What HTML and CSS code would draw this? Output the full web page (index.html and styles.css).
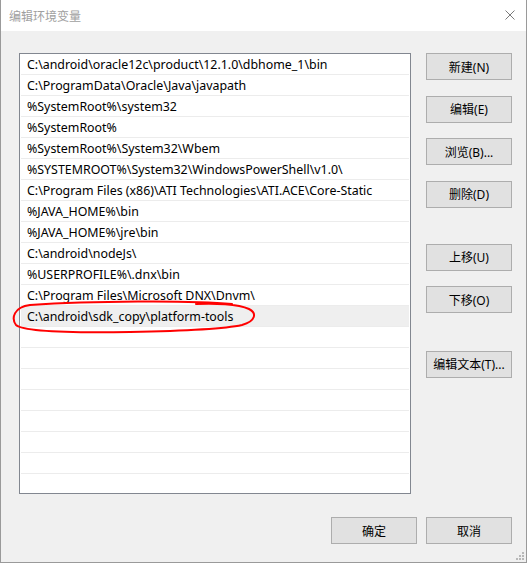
FILE: index.html
```html
<!DOCTYPE html>
<html lang="zh-CN">
<head>
  <meta charset="UTF-8">
  <title>编辑环境变量</title>
  <link rel="stylesheet" href="styles.css">
</head>
<body>
  <div class="window">
    <div class="title-bar">
      <span class="title">编辑环境变量</span>
      <svg class="close" width="10" height="10" viewBox="0 0 10 10">
        <path d="M0.5 0.5 L9.5 9.5 M9.5 0.5 L0.5 9.5" stroke="#7a7a7a" stroke-width="1" fill="none"/>
      </svg>
    </div>

    <div class="content">
      <div class="path-list" id="pathList"></div>

      <div class="side-buttons">
        <button>新建(N)</button>
        <button>编辑(E)</button>
        <button>浏览(B)...</button>
        <button>删除(D)</button>
        <button class="spaced">上移(U)</button>
        <button>下移(O)</button>
        <button class="spaced-more">编辑文本(T)...</button>
      </div>
    </div>

    <div class="footer">
      <button>确定</button>
      <button>取消</button>
    </div>

    <!-- marque rouge dessinée à la main autour de la ligne sélectionnée -->
    <svg class="annotation" width="527" height="563" viewBox="0 0 527 563">
      <path d="M232 304 C190 300, 90 301, 30 305 C14 307, 11 318, 16 325 C24 332, 70 333, 130 332 C180 331, 224 329, 242 325 C256 321, 257 313, 249 309 C238 304, 214 303, 196 304"
            stroke="#ff0000" stroke-width="2" fill="none" stroke-linecap="round"/>
    </svg>

    <svg class="grip" width="8" height="8" viewBox="0 0 8 8">
      <rect x="6" y="0" width="2" height="2" fill="#b8b8b8"/>
      <rect x="3" y="3" width="2" height="2" fill="#b8b8b8"/>
      <rect x="6" y="3" width="2" height="2" fill="#b8b8b8"/>
      <rect x="0" y="6" width="2" height="2" fill="#b8b8b8"/>
      <rect x="3" y="6" width="2" height="2" fill="#b8b8b8"/>
      <rect x="6" y="6" width="2" height="2" fill="#b8b8b8"/>
    </svg>
  </div>

  <script>
    // Liste des chemins de la variable Path
    const paths = [
      "C:\\android\\oracle12c\\product\\12.1.0\\dbhome_1\\bin",
      "C:\\ProgramData\\Oracle\\Java\\javapath",
      "%SystemRoot%\\system32",
      "%SystemRoot%",
      "%SystemRoot%\\System32\\Wbem",
      "%SYSTEMROOT%\\System32\\WindowsPowerShell\\v1.0\\",
      "C:\\Program Files (x86)\\ATI Technologies\\ATI.ACE\\Core-Static",
      "%JAVA_HOME%\\bin",
      "%JAVA_HOME%\\jre\\bin",
      "C:\\android\\nodeJs\\",
      "%USERPROFILE%\\.dnx\\bin",
      "C:\\Program Files\\Microsoft DNX\\Dnvm\\",
      "C:\\android\\sdk_copy\\platform-tools"
    ];
    const totalRows = 21;
    const selected = 12;

    const list = document.getElementById("pathList");
    for (let i = 0; i < totalRows; i++) {
      const row = document.createElement("div");
      row.className = "row" + (i === selected ? " selected" : "");
      row.textContent = paths[i] || "";
      list.appendChild(row);
    }
  </script>
</body>
</html>
```

FILE: styles.css
```css
body {
  margin: 0;
  background-color: #f0f0f0;
  font-family: "Noto Sans", "Noto Sans CJK SC", sans-serif;
  font-size: 12px;
  color: #000;
}
.window {
  position: relative;
  width: 527px;
  height: 563px;
  box-sizing: border-box;
  border: 1px solid #9a9a9a;
  border-top: none;
  background-color: #f0f0f0;
  overflow: hidden;
}
.title-bar {
  height: 31px;
  background-color: #fff;
  display: flex;
  align-items: center;
  justify-content: space-between;
  padding: 0 11px 0 8px;
}
.title {
  font-family: "Noto Sans CJK SC", sans-serif;
  font-size: 12px;
  color: #a0a0a0;
}
.close {
  margin-top: -1px;
}
.content {
  display: flex;
  align-items: flex-start;
  padding: 22px 0 0 18px;
}
.path-list {
  width: 392px;
  height: 441px;
  box-sizing: border-box;
  border: 1px solid #828790;
  background-color: #fff;
  overflow: hidden;
}
.row {
  height: 20px;
  line-height: 22px;
  margin: 0 1px;
  padding-left: 6px;
  border-bottom: 1px solid #ececec;
  white-space: nowrap;
  overflow: hidden;
  font-size: 12.4px;
}
.row.selected {
  background-color: #efefef;
}
.side-buttons {
  display: flex;
  flex-direction: column;
  gap: 15.5px;
  margin-left: 15px;
}
.side-buttons .spaced {
  margin-top: 20.5px;
}
.side-buttons .spaced-more {
  margin-top: 22px;
}
button {
  width: 86px;
  height: 27px;
  box-sizing: border-box;
  border: 1px solid #adadad;
  background-color: #e1e1e1;
  font-family: "Noto Sans", "Noto Sans CJK SC", sans-serif;
  font-size: 12px;
  color: #000;
  padding: 0;
}
.footer {
  display: flex;
  justify-content: flex-end;
  gap: 9px;
  padding: 23px 14px 0 0;
}
.annotation {
  position: absolute;
  left: -1px;
  top: 0;
  pointer-events: none;
}
.grip {
  position: absolute;
  right: 2px;
  bottom: 2px;
}
```
